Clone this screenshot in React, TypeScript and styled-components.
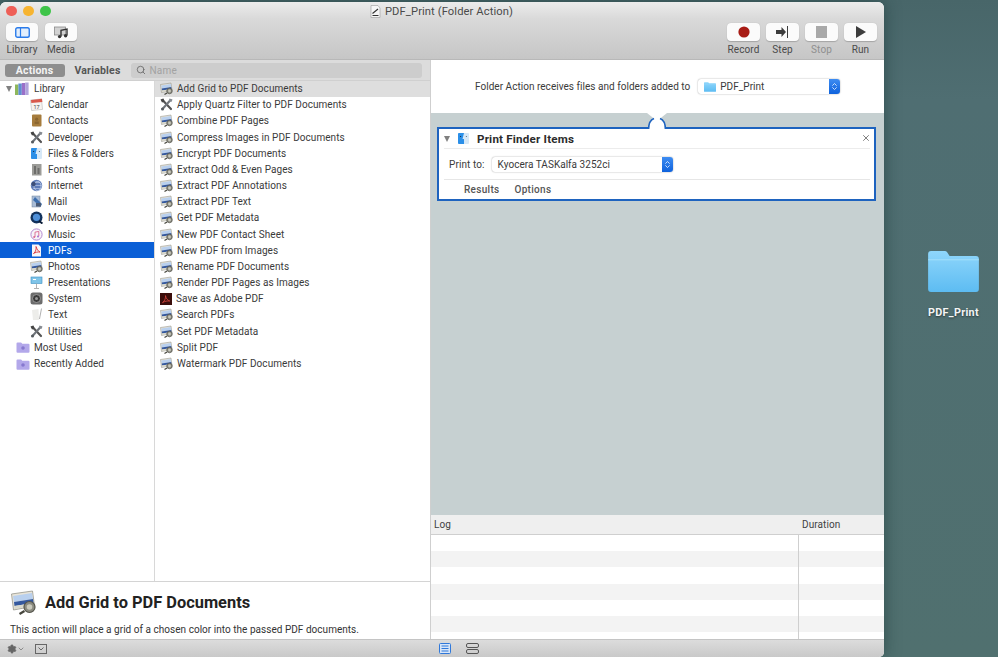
import React from "react";
import styled, { createGlobalStyle } from "styled-components";
import { Search, X, Settings, ChevronDown, ChevronsUpDown } from "lucide-react";

const Global = createGlobalStyle`
  html, body { margin: 0; padding: 0; width: 998px; height: 657px; overflow: hidden; background: #4f6e72; }
  * { box-sizing: border-box; }
  body { font-family: Roboto, "Liberation Sans", sans-serif; color: #2b2b2b; -webkit-font-smoothing: antialiased; }
`;

const Desktop = styled.div`
  width: 998px; height: 657px; display: flex; padding-top: 2px;
  background: linear-gradient(180deg, #486669 0, #4f6e72 100px, #50706f 100%);
`;
const Win = styled.div`
  width: 884px; height: 655px; display: flex; flex-direction: column; overflow: hidden;
  border-radius: 6px 6px 5px 0; background: #fff; box-shadow: 0 0 16px rgba(20, 50, 50, .55);
`;
const Chrome = styled.header`
  height: 58px; flex: none; padding: 1px 7px 0 6px; display: flex; flex-direction: column;
  background: linear-gradient(180deg, #ececec 0, #d9d9d9 30%, #c6c6c6 100%); border-bottom: 1px solid #b8b8b8;
`;
const TitleRow = styled.div`
  height: 17px; flex: none; position: relative; display: flex; justify-content: center; align-items: center; gap: 4px; font-size: 11.2px; letter-spacing: .1px; color: #4a4a4a;
`;
const Lights = styled.div`
  position: absolute; left: 0; top: 0; display: flex; gap: 6.5px; align-items: center; height: 16px;
`;
const Light = styled.span<{ $c: string }>`
  width: 10.5px; height: 10.5px; border-radius: 50%; background: ${p => p.$c};
`;
const ToolRow = styled.div`
  display: flex; justify-content: space-between; margin-top: 3px;
`;
const ToolGroup = styled.div`
  display: flex; gap: 7px;
`;
const Tool = styled.div`
  width: 32px; display: flex; flex-direction: column; align-items: center; font-size: 10px; letter-spacing: .1px; color: #4a4a4a; white-space: nowrap;
`;
const ToolGroupRight = styled(ToolGroup)`
  gap: 6px;
  & > div { width: 33px; }
`;
const ToolBtn = styled.div`
  width: 100%; height: 18px; background: #fbfbfb; border-radius: 4px; display: flex; align-items: center; justify-content: center;
  margin-bottom: 3px; box-shadow: 0 .5px 1px rgba(0,0,0,.2);
`;
const ToolLabel = styled.span<{ $dim?: boolean }>`
  color: ${p => (p.$dim ? "#8f8f8f" : "#4a4a4a")}; line-height: 12px;
`;
const Main = styled.main`
  flex: 1; min-height: 0; display: flex;
`;
const LeftPane = styled.section`
  width: 431px; flex: none; display: flex; flex-direction: column; border-right: 1px solid #cfcfcf;
`;
const TabBar = styled.div`
  height: 20.5px; flex: none; display: flex; align-items: center; padding: 1px 8px 0 4.5px; background: #dcdcdc; border-bottom: 1px solid #d0d0d0;
`;
const ActiveTab = styled.div`
  width: 60px; height: 13px; border-radius: 3px; background: #8e8e8e; color: #f4f4f4; font-size: 10.5px; font-weight: 700;
  display: flex; align-items: center; justify-content: center; letter-spacing: .2px;
`;
const Tab = styled.div`
  width: 66px; text-align: center; font-size: 10.5px; font-weight: 700; color: #555; letter-spacing: .2px;
`;
const SearchBox = styled.div`
  flex: 1; height: 15px; background: #cdcdcd; border-radius: 3px; display: flex; align-items: center; gap: 4px; padding-left: 5px;
  font-size: 10px; color: #a2a2a2; letter-spacing: .2px;
`;
const Lists = styled.div`
  flex: 1; min-height: 0; display: flex;
`;
const Sidebar = styled.div`
  width: 155px; flex: none; border-right: 1px solid #d8d8d8;
`;
const ActionList = styled.div`
  flex: 1;
`;
const Row = styled.div<{ $indent?: number; $active?: boolean; $soft?: boolean; $gap?: number }>`
  height: 16.18px; display: flex; align-items: center; gap: ${p => p.$gap ?? 5}px; white-space: nowrap; font-size: 10px; letter-spacing: .06px;
  padding-left: ${p => p.$indent ?? 0}px; color: ${p => (p.$active ? "#fff" : "#3a3a3a")};
  background: ${p => (p.$active ? "#0a5fd6" : p.$soft ? "#dedede" : "transparent")};
`;
const Triangle = styled.span`
  width: 0; height: 0; border-left: 3.5px solid transparent; border-right: 3.5px solid transparent; border-top: 6px solid #808080;
  margin: 0 -2px 0 6px; flex: none;
`;
const Desc = styled.div`
  height: 58px; flex: none; border-top: 1px solid #d4d4d4; padding: 7px 0 0 10px;
`;
const DescHead = styled.div`
  display: flex; align-items: center; gap: 8px; height: 26px; font-size: 16.4px; font-weight: 700; color: #222;
`;
const DescText = styled.div`
  margin-top: 9px; font-size: 10px; letter-spacing: .03px; color: #333; white-space: nowrap;
`;
const RightPane = styled.section`
  flex: 1; display: flex; flex-direction: column; min-width: 0;
`;
const Receives = styled.div`
  height: 53px; flex: none; display: flex; align-items: center; padding: 0 0 0 44px; gap: 8px; font-size: 10px; letter-spacing: .03px; color: #3a3a3a;
`;
const Popup = styled.div<{ $w: number }>`
  width: ${p => p.$w}px; height: 15px; border-radius: 3px; background: #fff; box-shadow: 0 0 1.5px rgba(0,0,0,.45); display: flex; align-items: center;
  font-size: 10px; letter-spacing: .03px; overflow: hidden; gap: 4px; color: #3a3a3a; padding-left: 6px;
`;
const PopupText = styled.span`
  flex: 1; white-space: nowrap;
`;
const PopupStep = styled.span`
  width: 11px; height: 100%; background: linear-gradient(#3d8cf2, #0f62dc); display: flex; align-items: center; justify-content: center; flex: none; color: #fff;
`;
const Workflow = styled.div`
  flex: 1; min-height: 0; background: #c6d0d1; padding: 14px 8px 0 6px;
`;
const Card = styled.div`
  height: 74px; position: relative; background: #fff; border: 2px solid #1e63bf; display: flex; flex-direction: column; padding: 0 4px 0 5px;
`;
const Notch = styled.svg`
  position: absolute; left: 206px; top: -16px; width: 24px; height: 16px;
`;
const CardHead = styled.div`
  height: 20px; flex: none; display: flex; align-items: center; font-size: 11.6px; font-weight: 700; letter-spacing: .2px; color: #2c2c2c; border-bottom: 1px solid #ececec; position: relative;
`;
const CardTriangle = styled(Triangle)`
  margin: 0 7px 0 0;
`;
const HeadGap = styled.span`
  width: 7px; flex: none;
`;
const CardClose = styled.span`
  position: absolute; right: -1px; top: 4px; color: #666; display: flex;
`;
const PrintRow = styled.div`
  height: 31px; flex: none; display: flex; align-items: center; gap: 7px; padding-left: 5px; font-size: 10px; letter-spacing: .1px; color: #3a3a3a; border-bottom: 1px solid #e6e6e6;
`;
const CardTabs = styled.div`
  display: flex; gap: 15px; padding-left: 20px; height: 19px; align-items: center; font-size: 10px; font-weight: 500; letter-spacing: .3px; color: #555;
`;
const Log = styled.div`
  height: 124px; flex: none; display: flex; flex-direction: column; background: #fff;
`;
const LogHead = styled.div`
  height: 20px; flex: none; display: grid; grid-template-columns: 367px 1fr; background: #efefef; border-bottom: 1px solid #cfcfcf; font-size: 10px; color: #3f3f3f; align-items: center; letter-spacing: .1px;
`;
const LogCell = styled.span<{ $pad: number }>`
  padding-left: ${p => p.$pad}px;
`;
const LogRows = styled.div`
  flex: 1; position: relative; overflow: hidden;
`;
const LogRow = styled.div<{ $alt: boolean }>`
  height: 16.2px; background: ${p => (p.$alt ? "#f3f3f3" : "#fff")};
`;
const LogDivider = styled.div`
  position: absolute; left: 367px; top: 0; bottom: 0; width: 1px; background: #cfcfcf;
`;
const Bottom = styled.footer`
  height: 18px; flex: none; display: flex; align-items: center; background: linear-gradient(#dcdcdc, #c9c9c9); border-top: 1px solid #c4c4c4; color: #666;
`;
const BottomLeft = styled.div`
  width: 431px; flex: none; display: flex; align-items: center; padding-left: 7px;
`;
const BottomRight = styled.div`
  display: flex; align-items: center; gap: 15px; padding-left: 8px;
`;
const GearWrap = styled.span`
  display: flex; align-items: center; margin-right: 10px; color: #666;
`;
const Side = styled.aside`
  flex: 1; display: flex; flex-direction: column; align-items: center; padding: 249px 0 0 25px;
`;
const FolderLabel = styled.div`
  font-size: 10.8px; font-weight: 700; letter-spacing: .3px; color: #f2f5f5; margin-top: 14px; text-shadow: 0 1px 2px rgba(0,0,0,.5);
`;

/* Icons */
const ActionIcon = () => (
  <svg width="13" height="13" viewBox="0 0 26 26">
    <path d="M1 5 L22 2 L24 17 L3 21Z" fill="#e8e4d8" stroke="#8a8a80" strokeWidth="1" />
    <path d="M2.5 7 L21.5 4 L22.5 10 L3.5 13Z" fill="#b9d0ee" />
    <path d="M3.5 13 L22.5 10 L23 14 L4 17Z" fill="#34589e" />
    <path d="M4 17 L23 14 L23.5 16.5 L4 20Z" fill="#d8d8cc" />
    <circle cx="19" cy="18" r="5.5" fill="#8b8b80" stroke="#55554c" strokeWidth="1.4" />
    <circle cx="19" cy="18" r="2.8" fill="#c9c9bd" />
    <path d="M14 22 L9 25" stroke="#45453c" strokeWidth="2.4" />
  </svg>
);
const ToolsIcon = ({ s = 13 }: { s?: number }) => (
  <svg width={s} height={s} viewBox="0 0 26 26">
    <path d="M5 4 L22 22" stroke="#555" strokeWidth="4.4" strokeLinecap="round" />
    <path d="M21 4 L5 22" stroke="#70757b" strokeWidth="4.2" strokeLinecap="round" />
    <path d="M1 3 L7 1 L9 7 L4 9Z" fill="#454545" />
    <path d="M19 1 L25 3 L23 8 L18 6Z" fill="#868b92" />
    <circle cx="5" cy="22" r="3" fill="#565b60" />
  </svg>
);
const LibIcon = () => (
  <svg width="14" height="14" viewBox="0 0 14 14">
    <rect x="0" y="2.5" width="3.4" height="10.5" fill="#8fb85c" />
    <rect x="3.4" y="1.5" width="3.4" height="11.5" fill="#5f8fd2" />
    <rect x="6.8" y="1" width="3.4" height="12" fill="#9a70c8" />
    <rect x="10.2" y=".5" width="3.4" height="12.5" fill="#b0a4dc" />
  </svg>
);
const Cal = () => (
  <svg width="13" height="13" viewBox="0 0 13 13">
    <rect x="1" y="1.5" width="11" height="10.5" fill="#f7f3f0" stroke="#bbb" strokeWidth=".6" transform="rotate(-6 6.5 6.5)" />
    <path d="M1 2 L12 .8 L12.4 4 L1.3 5Z" fill="#d9594c" />
    <text x="6.6" y="10.6" fontSize="5.5" textAnchor="middle" fill="#444" fontFamily="Roboto">17</text>
  </svg>
);
const Contacts = () => (
  <svg width="13" height="13" viewBox="0 0 13 13">
    <rect x="2" y="0.5" width="9.5" height="12" rx="1" fill="#a67c3d" />
    <circle cx="6.7" cy="5.2" r="1.6" fill="#8a6530" />
    <rect x="4.6" y="7.5" width="4.2" height="2.4" fill="#8a6530" />
  </svg>
);
const Finder = () => (
  <svg width="13" height="13" viewBox="0 0 13 13">
    <rect x="1" y="1" width="11" height="11" rx="1" fill="#d6e8f7" />
    <path d="M1 2a1 1 0 0 1 1-1h5L5.5 7H7v5H2a1 1 0 0 1-1-1Z" fill="#2b8fe8" />
    <circle cx="3.6" cy="4.5" r=".6" fill="#123" />
    <circle cx="9.4" cy="4.5" r=".6" fill="#567" />
  </svg>
);
const Fonts = () => (
  <svg width="13" height="13" viewBox="0 0 13 13">
    <rect x="2" y="1" width="9.5" height="11.5" fill="#9c9c98" />
    <path d="M4 3h2v8H4zM7.5 5h2v6h-2z" fill="#6d6d6a" />
  </svg>
);
const Internet = () => (
  <svg width="13" height="13" viewBox="0 0 13 13">
    <circle cx="6.5" cy="6.5" r="5.7" fill="#5d7bb8" />
    <ellipse cx="7.5" cy="7" rx="3.6" ry="4.6" fill="none" stroke="#d0dcf0" strokeWidth=".7" />
    <path d="M1.5 6.5h10M3 3.5h7M3 9.5h7" stroke="#c6d4ee" strokeWidth=".6" />
    <circle cx="3.5" cy="5" r="2.2" fill="#3d4f78" />
  </svg>
);
const Mail = () => (
  <svg width="13" height="13" viewBox="0 0 13 13">
    <rect x="2" y="1" width="8" height="11" fill="#a9bcd6" stroke="#71839c" strokeWidth=".5" />
    <path d="M3 5 L10.5 12 L12 9 L5 2Z" fill="#3e6fae" />
    <rect x="6" y="8" width="5" height="3.5" fill="#4a5a75" />
  </svg>
);
const Movies = () => (
  <svg width="13" height="13" viewBox="0 0 13 13">
    <circle cx="6.5" cy="6.5" r="6" fill="#12325c" />
    <circle cx="6.5" cy="6.3" r="3.6" fill="#4e8fd8" />
    <path d="M9 10 L12.5 12.5" stroke="#0b1d38" strokeWidth="2" />
  </svg>
);
const Music = () => (
  <svg width="13" height="13" viewBox="0 0 13 13">
    <circle cx="6.5" cy="6.5" r="5.6" fill="#f7f4f8" stroke="#b48ad0" strokeWidth="1" />
    <path d="M5 9V4.2L8.8 3.4V8.2" fill="none" stroke="#d9648f" strokeWidth=".9" />
    <circle cx="4.2" cy="9" r="1" fill="#d9648f" />
    <circle cx="8" cy="8.4" r="1" fill="#a56fd0" />
  </svg>
);
const Pdf = () => (
  <svg width="13" height="13" viewBox="0 0 13 13">
    <path d="M2 .5h6.5L11 3v9.5H2Z" fill="#f7f7f7" />
    <path d="M3.5 9.5C6 8 6.5 4 6 2.5c1 3 2 4.5 4 5.5-2.5-.2-4.5.3-6.5 1.5Z" fill="none" stroke="#d8333a" strokeWidth=".9" />
  </svg>
);
const Pres = () => (
  <svg width="13" height="13" viewBox="0 0 13 13">
    <rect x="1" y="1" width="11" height="6.5" fill="#7fc4e8" stroke="#3b8fc4" strokeWidth=".6" />
    <rect x="3" y="3" width="3" height="1" fill="#fff" />
    <path d="M6.5 7.5V12M4 12.5h5" stroke="#a9a9a9" strokeWidth=".9" />
  </svg>
);
const System = () => (
  <svg width="13" height="13" viewBox="0 0 13 13">
    <rect x=".5" y=".5" width="12" height="12" rx="2.5" fill="#6c6c6c" />
    <circle cx="6.5" cy="6.5" r="4" fill="#3b3b3b" stroke="#a8a8a8" strokeWidth=".8" />
    <circle cx="6.5" cy="6.5" r="1.5" fill="#999" />
  </svg>
);
const TextIc = () => (
  <svg width="13" height="13" viewBox="0 0 13 13">
    <path d="M2 2 L8.5 1 L9 12 L3 12Z" fill="#ededea" />
    <path d="M11.5 .5 L9.5 11" stroke="#a8a8a8" strokeWidth=".9" />
  </svg>
);
const SmartFolder = () => (
  <svg width="14" height="12" viewBox="0 0 14 12">
    <path d="M.5 2.5a1 1 0 0 1 1-1h3.6l1.2 1.2h6.2a1 1 0 0 1 1 1v7a1 1 0 0 1-1 1h-11a1 1 0 0 1-1-1Z" fill="#b3a8ea" />
    <circle cx="7" cy="7" r="1.8" fill="#8678cf" />
  </svg>
);
const AdobeIcon = () => (
  <svg width="12" height="12" viewBox="0 0 12 12">
    <rect width="12" height="12" fill="#3a0d0b" />
    <path d="M2.5 9.6C5 8.2 5.8 4.2 5.5 2.6 6.1 5.5 7.4 7.3 9.8 8c-2.6-.2-5 .2-7.3 1.6Z" fill="none" stroke="#d9453c" strokeWidth=".8" />
  </svg>
);
const BlueFolder = ({ w, h }: { w: number; h: number }) => (
  <svg width={w} height={h} viewBox="0 0 52 42">
    <defs>
      <linearGradient id="fg" x1="0" y1="0" x2="0" y2="1">
        <stop offset="0" stopColor="#8fd6fb" />
        <stop offset="1" stopColor="#5dbcf2" />
      </linearGradient>
    </defs>
    <path d="M0 3a3 3 0 0 1 3-3h14a3 3 0 0 1 2.5 1.3L22 5h27a3 3 0 0 1 3 3v31a3 3 0 0 1-3 3H3a3 3 0 0 1-3-3Z" fill="url(#fg)" />
    <path d="M0 9h52" stroke="#a6e0fc" strokeWidth="1" />
  </svg>
);

const sidebarRows: [string, React.ReactNode][] = [
  ["Calendar", <Cal />], ["Contacts", <Contacts />], ["Developer", <ToolsIcon />], ["Files & Folders", <Finder />],
  ["Fonts", <Fonts />], ["Internet", <Internet />], ["Mail", <Mail />], ["Movies", <Movies />], ["Music", <Music />],
  ["PDFs", <Pdf />], ["Photos", <ActionIcon />], ["Presentations", <Pres />], ["System", <System />], ["Text", <TextIc />], ["Utilities", <ToolsIcon />],
];
const actions: [string, React.ReactNode][] = [
  ["Add Grid to PDF Documents", <ActionIcon />], ["Apply Quartz Filter to PDF Documents", <ToolsIcon />],
  ["Combine PDF Pages", <ActionIcon />], ["Compress Images in PDF Documents", <ActionIcon />], ["Encrypt PDF Documents", <ActionIcon />],
  ["Extract Odd & Even Pages", <ActionIcon />], ["Extract PDF Annotations", <ActionIcon />], ["Extract PDF Text", <ActionIcon />],
  ["Get PDF Metadata", <ActionIcon />], ["New PDF Contact Sheet", <ActionIcon />], ["New PDF from Images", <ActionIcon />],
  ["Rename PDF Documents", <ActionIcon />], ["Render PDF Pages as Images", <ActionIcon />], ["Save as Adobe PDF", <AdobeIcon />],
  ["Search PDFs", <ActionIcon />], ["Set PDF Metadata", <ActionIcon />], ["Split PDF", <ActionIcon />], ["Watermark PDF Documents", <ActionIcon />],
];

export default function App() {
  return (
    <Desktop>
      <Global />
      <Win>
        <Chrome>
          <TitleRow>
            <Lights>
              <Light $c="#ee5f57" />
              <Light $c="#f6b431" />
              <Light $c="#3ec449" />
            </Lights>
            <svg width="11" height="13" viewBox="0 0 11 13">
              <path d="M1 .5h7L10 3v9.5H1Z" fill="#f6f6f6" stroke="#9a9a9a" strokeWidth=".6" />
              <path d="M2.5 8.5 L8 4 M2.5 10.5h6" stroke="#333" strokeWidth="1.1" />
            </svg>
            <span>PDF_Print (Folder Action)</span>
          </TitleRow>
          <ToolRow>
            <ToolGroup>
              <Tool>
                <ToolBtn>
                  <svg width="15" height="11" viewBox="0 0 15 11">
                    <rect x=".75" y=".75" width="13.5" height="9.5" rx="1.8" fill="#e2eefc" stroke="#2a7bea" strokeWidth="1.4" />
                    <path d="M5.5 1v9" stroke="#2a7bea" strokeWidth="1.2" />
                  </svg>
                </ToolBtn>
                <ToolLabel>Library</ToolLabel>
              </Tool>
              <Tool>
                <ToolBtn>
                  <svg width="15" height="13" viewBox="0 0 15 13">
                    <rect x=".5" y="1" width="11" height="8" fill="#d2d2d2" stroke="#8a8a8a" strokeWidth=".8" />
                    <path d="M7 10.5V4.2L13 3v6.6" fill="none" stroke="#333" strokeWidth="1.4" />
                    <circle cx="5.6" cy="10.6" r="1.7" fill="#333" />
                    <circle cx="11.6" cy="9.8" r="1.7" fill="#333" />
                  </svg>
                </ToolBtn>
                <ToolLabel>Media</ToolLabel>
              </Tool>
            </ToolGroup>
            <ToolGroupRight>
              <Tool>
                <ToolBtn>
                  <svg width="12" height="12" viewBox="0 0 12 12"><circle cx="6" cy="6" r="5.6" fill="#a81c15" /></svg>
                </ToolBtn>
                <ToolLabel>Record</ToolLabel>
              </Tool>
              <Tool>
                <ToolBtn>
                  <svg width="13" height="12" viewBox="0 0 13 12">
                    <path d="M0 4h5.5V1L10 6l-4.5 5V8H0Z" fill="#3d3d3d" />
                    <path d="M11.5 0v12" stroke="#3d3d3d" strokeWidth="1" />
                  </svg>
                </ToolBtn>
                <ToolLabel>Step</ToolLabel>
              </Tool>
              <Tool>
                <ToolBtn>
                  <svg width="11" height="12" viewBox="0 0 11 12"><rect width="11" height="12" fill="#a9a9a9" /></svg>
                </ToolBtn>
                <ToolLabel $dim>Stop</ToolLabel>
              </Tool>
              <Tool>
                <ToolBtn>
                  <svg width="10" height="12" viewBox="0 0 10 12"><path d="M0 0 L10 6 L0 12Z" fill="#3d3d3d" /></svg>
                </ToolBtn>
                <ToolLabel>Run</ToolLabel>
              </Tool>
            </ToolGroupRight>
          </ToolRow>
        </Chrome>
        <Main>
          <LeftPane>
            <TabBar>
              <ActiveTab>Actions</ActiveTab>
              <Tab>Variables</Tab>
              <SearchBox>
                <Search size={10} color="#666" strokeWidth={2} />
                Name
              </SearchBox>
            </TabBar>
            <Lists>
              <Sidebar>
                <Row>
                  <Triangle />
                  <LibIcon />
                  Library
                </Row>
                {sidebarRows.map(([label, icon]) => (
                  <Row key={label} $indent={30} $active={label === "PDFs"}>
                    {icon}
                    {label}
                  </Row>
                ))}
                <Row $indent={16} $gap={4}><SmartFolder />Most Used</Row>
                <Row $indent={16} $gap={4}><SmartFolder />Recently Added</Row>
              </Sidebar>
              <ActionList>
                {actions.map(([label, icon], i) => (
                  <Row key={label} $indent={5} $soft={i === 0} $gap={4}>
                    {icon}
                    {label}
                  </Row>
                ))}
              </ActionList>
            </Lists>
            <Desc>
              <DescHead>
                <svg width="27" height="26" viewBox="0 0 26 26">
                  <path d="M1 5 L22 2 L24 17 L3 21Z" fill="#e8e4d8" stroke="#8a8a80" strokeWidth=".7" />
                  <path d="M2.5 7 L21.5 4 L22.5 10 L3.5 13Z" fill="#b9d0ee" />
                  <path d="M3.5 13 L22.5 10 L23 14 L4 17Z" fill="#34589e" />
                  <path d="M4 17 L23 14 L23.5 16.5 L4 20Z" fill="#d8d8cc" />
                  <circle cx="19" cy="18" r="5.5" fill="#8b8b80" stroke="#55554c" strokeWidth="1.2" />
                  <circle cx="19" cy="18" r="2.8" fill="#c9c9bd" />
                  <path d="M14 22 L9 25" stroke="#45453c" strokeWidth="2.2" />
                </svg>
                Add Grid to PDF Documents
              </DescHead>
              <DescText>This action will place a grid of a chosen color into the passed PDF documents.</DescText>
            </Desc>
          </LeftPane>
          <RightPane>
            <Receives>
              Folder Action receives files and folders added to
              <Popup $w={142}>
                <BlueFolder w={12} h={10} />
                <PopupText>PDF_Print</PopupText>
                <PopupStep><ChevronsUpDown size={9} strokeWidth={2} /></PopupStep>
              </Popup>
            </Receives>
            <Workflow>
              <Card>
                <Notch viewBox="0 0 24 16">
                  <path d="M2 0 L12 8 L22 0Z" fill="#fff" />
                  <path d="M3 16 C3 8 7 5 12 5 C17 5 21 8 21 16Z" fill="#fff" />
                  <path d="M3.6 16 C3.6 11 5.5 7 9 5.6 M20.4 16 C20.4 11 18.5 7 15 5.6" fill="none" stroke="#1e63bf" strokeWidth="1.6" />
                </Notch>
                <CardHead>
                  <CardTriangle />
                  <Finder />
                  <HeadGap />
                  Print Finder Items
                  <CardClose><X size={10} strokeWidth={2} /></CardClose>
                </CardHead>
                <PrintRow>
                  Print to:
                  <Popup $w={181}>
                    <PopupText>Kyocera TASKalfa 3252ci</PopupText>
                    <PopupStep><ChevronsUpDown size={9} strokeWidth={2} /></PopupStep>
                  </Popup>
                </PrintRow>
                <CardTabs>
                  <span>Results</span>
                  <span>Options</span>
                </CardTabs>
              </Card>
            </Workflow>
            <Log>
              <LogHead>
                <LogCell $pad={3}>Log</LogCell>
                <LogCell $pad={4}>Duration</LogCell>
              </LogHead>
              <LogRows>
                {[0, 1, 2, 3, 4, 5, 6].map(i => <LogRow key={i} $alt={i % 2 === 1} />)}
                <LogDivider />
              </LogRows>
            </Log>
          </RightPane>
        </Main>
        <Bottom>
          <BottomLeft>
            <GearWrap>
              <Settings size={10} fill="#666" strokeWidth={2} />
              <ChevronDown size={8} strokeWidth={2} />
            </GearWrap>
            <svg width="12" height="10" viewBox="0 0 12 10">
              <rect x=".5" y=".5" width="11" height="9" fill="none" stroke="#666" />
              <path d="M3.5 3.5 L6 6 L8.5 3.5" fill="none" stroke="#666" />
            </svg>
          </BottomLeft>
          <BottomRight>
            <svg width="12" height="11" viewBox="0 0 12 11">
              <rect x=".5" y=".5" width="11" height="10" rx="1" fill="#d8e6f8" stroke="#2f78da" />
              <path d="M2.5 3h7M2.5 5.5h7M2.5 8h7" stroke="#2f78da" />
            </svg>
            <svg width="13" height="11" viewBox="0 0 13 11">
              <rect x=".5" y=".5" width="12" height="4" rx="1.5" fill="none" stroke="#555" />
              <rect x=".5" y="6.5" width="12" height="4" rx="1.5" fill="none" stroke="#555" />
            </svg>
          </BottomRight>
        </Bottom>
      </Win>
      <Side>
        <BlueFolder w={51} h={41} />
        <FolderLabel>PDF_Print</FolderLabel>
      </Side>
    </Desktop>
  );
}
